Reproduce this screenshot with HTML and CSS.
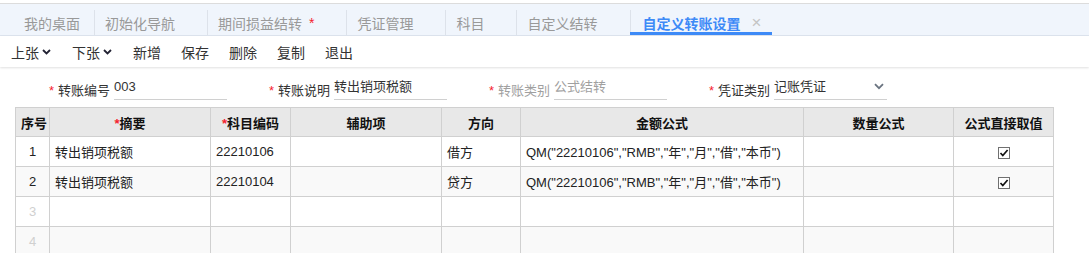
FILE: index.html
```html
<!DOCTYPE html>
<html lang="zh-CN">
<head>
  <meta charset="UTF-8">
  <title>自定义转账设置</title>
  <link rel="stylesheet" href="styles.css">
</head>
<body>
  <div class="tabs">
    <div class="tab first">我的桌面</div>
    <div class="tab">初始化导航</div>
    <div class="tab">期间损益结转<span class="dirty">*</span></div>
    <div class="tab">凭证管理</div>
    <div class="tab">科目</div>
    <div class="tab">自定义结转</div>
    <div class="tab active">自定义转账设置<span class="close">&times;</span></div>
  </div>

  <div class="toolbar">
    <span class="tool">上张<svg class="caret" width="9" height="6" viewBox="0 0 9 6"><path d="M1 1l3.5 3.5L8 1" fill="none" stroke="#223" stroke-width="1.8"/></svg></span>
    <span class="tool">下张<svg class="caret" width="9" height="6" viewBox="0 0 9 6"><path d="M1 1l3.5 3.5L8 1" fill="none" stroke="#223" stroke-width="1.8"/></svg></span>
    <span class="tool">新增</span>
    <span class="tool">保存</span>
    <span class="tool">删除</span>
    <span class="tool">复制</span>
    <span class="tool">退出</span>
  </div>

  <div class="form-row">
    <div class="field">
      <label><i>*</i>转账编号</label>
      <div class="input">003</div>
    </div>
    <div class="field">
      <label><i>*</i>转账说明</label>
      <div class="input">转出销项税额</div>
    </div>
    <div class="field disabled">
      <label><i>*</i>转账类别</label>
      <div class="input">公式结转</div>
    </div>
    <div class="field">
      <label><i>*</i>凭证类别</label>
      <div class="input select">记账凭证<svg class="caret" width="10" height="7" viewBox="0 0 10 7"><path d="M1 1.2l4 4 4-4" fill="none" stroke="#6a7480" stroke-width="1.8"/></svg></div>
    </div>
  </div>

  <table class="grid">
    <colgroup>
      <col style="width:34px"><col style="width:161px"><col style="width:80px"><col style="width:151px">
      <col style="width:79px"><col style="width:283px"><col style="width:150px"><col style="width:100px">
    </colgroup>
    <thead>
      <tr>
        <th>序号</th>
        <th><i>*</i>摘要</th>
        <th><i>*</i>科目编码</th>
        <th>辅助项</th>
        <th>方向</th>
        <th>金额公式</th>
        <th>数量公式</th>
        <th>公式直接取值</th>
      </tr>
    </thead>
    <tbody>
      <tr>
        <td class="no">1</td>
        <td>转出销项税额</td>
        <td>22210106</td>
        <td></td>
        <td>借方</td>
        <td>QM("22210106","RMB","年","月","借","本币")</td>
        <td></td>
        <td class="chk"><span class="box"><svg width="10" height="10" viewBox="0 0 10 10"><path d="M1.5 5l2.3 2.5L8.6 2" fill="none" stroke="#111" stroke-width="1.7"/></svg></span></td>
      </tr>
      <tr>
        <td class="no">2</td>
        <td>转出销项税额</td>
        <td>22210104</td>
        <td></td>
        <td>贷方</td>
        <td>QM("22210106","RMB","年","月","借","本币")</td>
        <td></td>
        <td class="chk"><span class="box"><svg width="10" height="10" viewBox="0 0 10 10"><path d="M1.5 5l2.3 2.5L8.6 2" fill="none" stroke="#111" stroke-width="1.7"/></svg></span></td>
      </tr>
      <tr class="empty">
        <td class="no">3</td><td></td><td></td><td></td><td></td><td></td><td></td><td></td>
      </tr>
      <tr class="empty">
        <td class="no">4</td><td></td><td></td><td></td><td></td><td></td><td></td><td></td>
      </tr>
    </tbody>
  </table>
</body>
</html>
```

FILE: styles.css
```css
body {
  margin: 0;
  padding-top: 3px;
  font-family: "Liberation Sans", "Noto Sans CJK SC", sans-serif;
  font-size: 13px;
  color: #333;
  background: #fff;
}

/* tab strip */
.tabs {
  display: flex;
  align-items: stretch;
  height: 33px;
  background: #f0f5fc;
  border-top: 1px solid #dcdcdc;
  border-bottom: 1px solid #dde4ee;
  padding-left: 13px;
  box-sizing: border-box;
}
.tab {
  display: flex;
  align-items: center;
  padding: 0 32px 0 10px;
  font-size: 14px;
  color: #999;
  border-left: 1px solid #dde2ea;
  margin: 6px 0 0;
  position: relative;
}
.tab.first {
  border-left: none;
  padding: 0 14px 0 11px;
}
.tab .dirty {
  color: #f5222d;
  margin-left: 7px;
}
.tab.active {
  color: #3d8af7;
  font-weight: bold;
  padding: 0 11px 0 11px;
  margin-left: 1px;
}
.tab.active::after {
  content: "";
  position: absolute;
  left: -1px;
  right: 0;
  bottom: 0;
  height: 3px;
  background: #3d8af7;
}
.tab .close {
  color: #c4c4c4;
  font-weight: normal;
  font-size: 17px;
  margin-left: 11px;
}

/* toolbar */
.toolbar {
  display: flex;
  align-items: center;
  height: 31px;
  padding-left: 1px;
  box-shadow: 0 1px 2px rgba(0, 0, 0, 0.12);
}
.tool {
  display: flex;
  align-items: center;
  padding: 0 10px;
  font-size: 14px;
  color: #333;
}
.tool .caret {
  margin-left: 3px;
  margin-right: 1px;
}

/* form */
.form-row {
  display: flex;
  padding: 11px 0 0 10px;
  height: 29px;
}
.field {
  display: flex;
  align-items: center;
  width: 220px;
  height: 22px;
}
.field label {
  width: 100px;
  padding-right: 4px;
  text-align: right;
  color: #333;
}
.field label i,
.grid th i {
  font-style: normal;
  color: #f5222d;
}
.field label i {
  margin-right: 4px;
}
.field .input {
  width: 113px;
  height: 21px;
  line-height: 16px;
  border-bottom: 1px solid #d0d0d0;
  box-sizing: border-box;
  color: #333;
}
.field.disabled label,
.field.disabled .input {
  color: #a0a0a0;
}
.field .select {
  display: flex;
  justify-content: space-between;
  align-items: flex-start;
}
.field .select .caret {
  margin: 4px 3px 0 0;
}

/* grid */
.grid {
  margin-left: 15px;
  border-collapse: collapse;
  table-layout: fixed;
  width: 1039px;
}
.grid th,
.grid td {
  border: 1px solid #d0d0d0;
  padding: 0 5px;
  white-space: nowrap;
  overflow: hidden;
}
.grid th {
  height: 28px;
  background: #e8e8e8;
  color: #111;
  font-weight: bold;
  text-align: center;
}
.grid td {
  height: 29px;
  color: #222;
}
.grid tbody tr:nth-child(even) td {
  background: #f9f9f9;
}
.grid td.no {
  text-align: center;
  padding: 0;
}
.grid tr.empty td.no {
  color: #d0d0d0;
}
.grid td.chk {
  text-align: center;
}
.box {
  display: inline-flex;
  align-items: center;
  justify-content: center;
  width: 10px;
  height: 10px;
  border: 1px solid #707070;
  background: #fff;
  vertical-align: middle;
}
```
